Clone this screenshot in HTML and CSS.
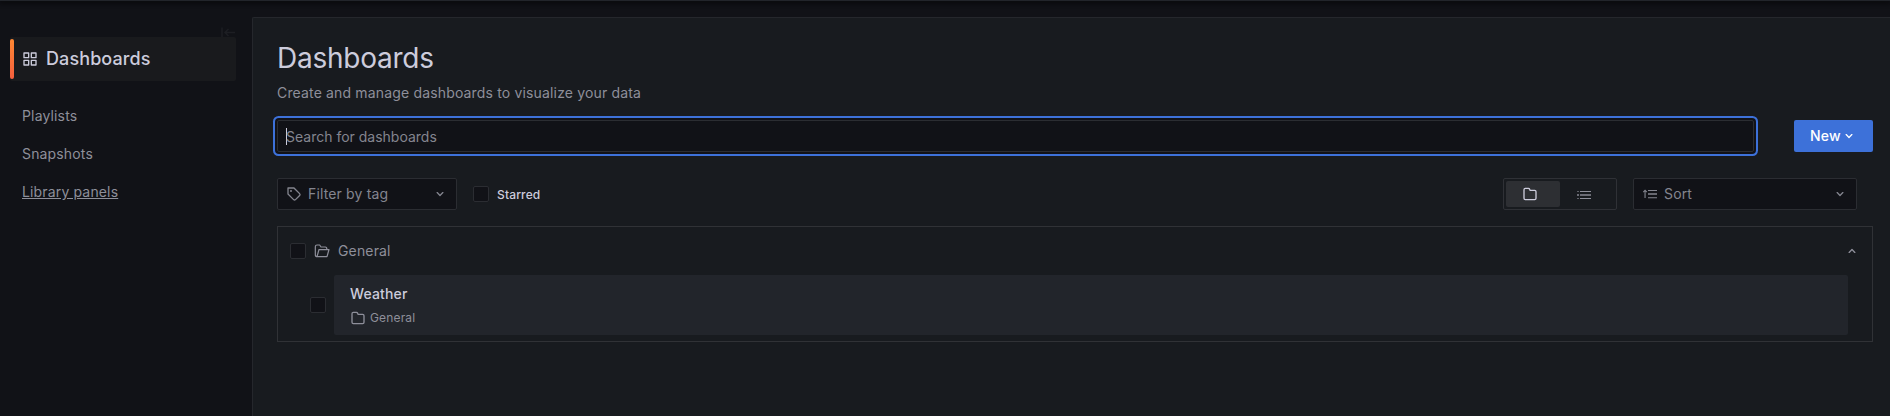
FILE: index.html
```
<!DOCTYPE html>
<html lang="en">
<head>
<meta charset="utf-8">
<title>Dashboards</title>
<link rel="stylesheet" href="styles.css">
</head>
<body>
<svg class="defs" width="0" height="0">
  <symbol id="folder" viewBox="0 0 24 24"><path d="M19,5.5H12.72l-.32-1a3,3,0,0,0-2.84-2H5a3,3,0,0,0-3,3v13a3,3,0,0,0,3,3H19a3,3,0,0,0,3-3V8.5A3,3,0,0,0,19,5.5Zm1,13a1,1,0,0,1-1,1H5a1,1,0,0,1-1-1V5.5a1,1,0,0,1,1-1H9.56a1,1,0,0,1,.95.68l.54,1.64A1,1,0,0,0,12,7.5h7a1,1,0,0,1,1,1Z"/></symbol>
  <symbol id="angle-down" viewBox="0 0 24 24"><path d="M17,9.17a1,1,0,0,0-1.41,0L12,12.71,8.46,9.17a1,1,0,0,0-1.41,0,1,1,0,0,0,0,1.42l4.24,4.24a1,1,0,0,0,1.42,0L17,10.59A1,1,0,0,0,17,9.17Z"/></symbol>
</svg>
<div class="topbar"></div>
<div class="app">
  <nav class="sidebar">
    <svg class="collapse" viewBox="0 0 16 16"><path d="M2 2.500V12.500M15 7.500H5M8.500 4L5 7.500L8.500 11"/></svg>
    <a class="nav-title">
      <svg class="icon" viewBox="0 0 24 24"><path d="M10,13H3a1,1,0,0,0-1,1v7a1,1,0,0,0,1,1h7a1,1,0,0,0,1-1V14A1,1,0,0,0,10,13ZM9,20H4V15H9ZM21,2H14a1,1,0,0,0-1,1v7a1,1,0,0,0,1,1h7a1,1,0,0,0,1-1V3A1,1,0,0,0,21,2ZM20,9H15V4h5Zm1,4H14a1,1,0,0,0-1,1v7a1,1,0,0,0,1,1h7a1,1,0,0,0,1-1V14A1,1,0,0,0,21,13Zm-1,7H15V15h5ZM10,2H3A1,1,0,0,0,2,3v7a1,1,0,0,0,1,1h7a1,1,0,0,0,1-1V3A1,1,0,0,0,10,2ZM9,9H4V4H9Z"/></svg>
      <span>Dashboards</span>
    </a>
    <ul class="nav-list">
      <li><a>Playlists</a></li>
      <li><a>Snapshots</a></li>
      <li><a class="hovered">Library panels</a></li>
    </ul>
  </nav>
  <main class="page">
    <h1>Dashboards</h1>
    <p class="subtitle">Create and manage dashboards to visualize your data</p>
    <div class="search-row">
      <div class="search"><span class="caret"></span><span class="placeholder">Search for dashboards</span></div>
      <button class="new">New<svg class="icon" viewBox="0 0 24 24"><use href="#angle-down"/></svg></button>
    </div>
    <div class="filters">
      <div class="select tag">
        <svg class="icon" viewBox="0 0 24 24"><path d="M7.5,6A1.5,1.5,0,1,0,9,7.5,1.5,1.5,0,0,0,7.5,6Zm13.62,4.71L12.71,2.29A1,1,0,0,0,12,2H3A1,1,0,0,0,2,3v9a1,1,0,0,0,.29.71l8.42,8.41a3,3,0,0,0,4.24,0L21.12,15a3,3,0,0,0,0-4.24Zm-1.41,2.82h0l-6.18,6.17a1,1,0,0,1-1.41,0L4,11.59V4h7.59l8.12,8.12a1,1,0,0,1,.29.71A1,1,0,0,1,19.71,13.53Z"/></svg>
        <span>Filter by tag</span>
        <svg class="icon arrow" viewBox="0 0 24 24"><use href="#angle-down"/></svg>
      </div>
      <div class="starred"><span class="checkbox"></span><span class="starred-label">Starred</span></div>
      <div class="layout-toggle">
        <span class="option selected"><svg class="icon" viewBox="0 0 24 24"><use href="#folder"/></svg></span>
        <span class="option"><svg class="icon" viewBox="0 0 16 16"><path d="M4 5h11v1H4zM4 12h11v1H4z"/><path opacity=".7" d="M1 8h2v2H1zM4 8h11v2H4z"/><path opacity=".6" d="M1 5h2v1H1zM1 12h2v1H1z"/></svg></span>
      </div>
      <div class="select sort">
        <svg class="icon" viewBox="0 0 16 16"><path d="M6 4h9v1H6zM6 11.300h9v1H6z"/><path opacity=".75" d="M6 7h9v2H6z"/><path d="M2.500 5.600V12h1.100V5.600L4.500 6.500L5.200 5.700L3.050 3.600L.900 5.700L1.600 6.500z"/></svg>
        <span>Sort</span>
        <svg class="icon arrow" viewBox="0 0 24 24"><use href="#angle-down"/></svg>
      </div>
    </div>
    <section class="folder-section">
      <header class="folder-head">
        <span class="checkbox"></span>
        <svg class="icon" viewBox="0 0 24 24"><path class="line" d="M4.500 20.500C3 20.500 2 19.500 2 18V5.500C2 4 3 3 4.500 3H8.500L10.500 6H17C18.500 6 19.300 7 19.300 9.300M4.500 20.500L7.500 9.800H22.500L19.500 20.500Z"/></svg>
        <span>General</span>
        <svg class="icon arrow up" viewBox="0 0 24 24"><use href="#angle-down"/></svg>
      </header>
      <div class="result">
        <span class="checkbox"></span>
        <div class="card">
          <h2>Weather</h2>
          <div class="meta"><svg class="icon" viewBox="0 0 24 24"><use href="#folder"/></svg><span>General</span></div>
        </div>
      </div>
    </section>
  </main>
</div>
</body>
</html>
```
FILE: styles.css
```
* { box-sizing: border-box; }
body {
  margin: 0;
  height: 416px;
  overflow: hidden;
  display: flex;
  flex-direction: column;
  background: #111217;
  color: #ccccdc;
  font: 400 14px/22px Inter, "Liberation Sans", sans-serif;
  letter-spacing: 0.15px;
}
h1, h2, p, ul { margin: 0; padding: 0; }
.defs { position: absolute; }
.icon { width: 16px; height: 16px; flex: none; fill: currentColor; }
.line { fill: none; stroke: currentColor; stroke-width: 1.8; stroke-linejoin: round; }

.topbar {
  height: 1px;
  flex: none;
  background: #22252b;
  box-shadow: 0 1px 5px 1px #050507;
}
.app { flex: 1; display: flex; padding-top: 16px; }

.sidebar { width: 252px; padding: 8px 16px 0 10px; display: flex; flex-direction: column; }
.collapse {
  width: 16px;
  height: 16px;
  align-self: flex-end;
  margin-bottom: -4px;
  fill: none;
  stroke: #1d1e23;
  stroke-width: 1.5;
}
.nav-title {
  position: relative;
  display: flex;
  align-items: center;
  gap: 8px;
  height: 44px;
  padding-left: 12px;
  border-radius: 2px;
  background: #191a1d;
  font-size: 18px;
  font-weight: 500;
  letter-spacing: 0.1px;
}
.nav-title::before {
  content: "";
  position: absolute;
  left: 0;
  top: 2px;
  bottom: 2px;
  width: 4px;
  border-radius: 2px;
  background: linear-gradient(#ff8833, #f55f3e);
}
.nav-list {
  list-style: none;
  padding: 24px 12px 0;
  display: grid;
  gap: 16px;
  color: #8e8f9a;
}
.hovered { text-decoration: underline; }

.page {
  flex: 1;
  padding: 24px 17px 0 24px;
  border: solid #25272c;
  border-width: 1px 0 0 1px;
  border-radius: 2px 0 0 0;
  background: #181b1f;
}
h1 { font-size: 28px; font-weight: 400; line-height: 32px; letter-spacing: -0.25px; }
.subtitle { margin-top: 8px; color: #8e8f9a; letter-spacing: 0.16px; }

.search-row { display: flex; gap: 40px; margin-top: 16px; }
.search {
  flex: 1;
  display: flex;
  align-items: center;
  height: 32px;
  padding-left: 8px;
  border: 1px solid #2b2d32;
  border-radius: 2px;
  background: #111217;
  box-shadow: 0 0 0 2px #111217, 0 0 0 4px #3d71d9;
  color: #84858f;
}
.caret { width: 1px; height: 17px; margin-right: -1px; background: #ccccdc; }
.placeholder { padding-top: 2px; letter-spacing: 0; }
.new {
  display: flex;
  align-items: center;
  width: 79px;
  height: 32px;
  padding: 0 0 0 16px;
  border: 0;
  border-radius: 2px;
  background: #3d71d9;
  color: #fff;
  font: inherit;
  font-weight: 500;
  letter-spacing: 0.15px;
}

.filters { display: flex; align-items: center; margin: 26px 16px 16px 0; }
.select {
  display: flex;
  align-items: center;
  gap: 6px;
  height: 32px;
  padding: 0 8px;
  border: 1px solid #2b2d32;
  border-radius: 2px;
  background: #111217;
  color: #84858f;
}
.arrow { margin-left: auto; }
.tag { width: 180px; }
.sort { width: 224px; }
.starred {
  display: flex;
  align-items: center;
  gap: 8px;
  margin-left: 16px;
  font-size: 12px;
  font-weight: 500;
}
.starred-label { padding-top: 2px; }
.checkbox {
  flex: none;
  width: 16px;
  height: 16px;
  border: 1px solid #2b2d32;
  border-radius: 2px;
  background: #111217;
}
.layout-toggle {
  display: flex;
  width: 114px;
  height: 32px;
  margin: 0 16px 0 auto;
  padding: 2px;
  border: 1px solid #2f3136;
  border-radius: 2px;
  color: #8e8f9a;
}
.option { flex: 1; display: flex; align-items: center; padding-left: 16px; border-radius: 2px; }
.selected { background: #2d2f33; color: #ccccdc; }

.folder-section { height: 116px; border: 1px solid #303236; }
.folder-head {
  display: flex;
  align-items: center;
  gap: 8px;
  height: 48px;
  padding: 0 12px;
  color: #8e8f9a;
}
.up { transform: rotate(180deg); }
.result { display: flex; align-items: center; gap: 8px; padding: 0 24px 0 32px; }
.card {
  flex: 1;
  height: 60px;
  padding: 8px 16px;
  border-radius: 2px;
  background: #22252b;
}
.card h2 { font-size: 14px; line-height: 22px; font-weight: 500; }
.meta {
  display: flex;
  align-items: center;
  gap: 4px;
  margin-top: 4px;
  font-size: 12px;
  line-height: 18px;
  color: #8e8f9a;
}
```
